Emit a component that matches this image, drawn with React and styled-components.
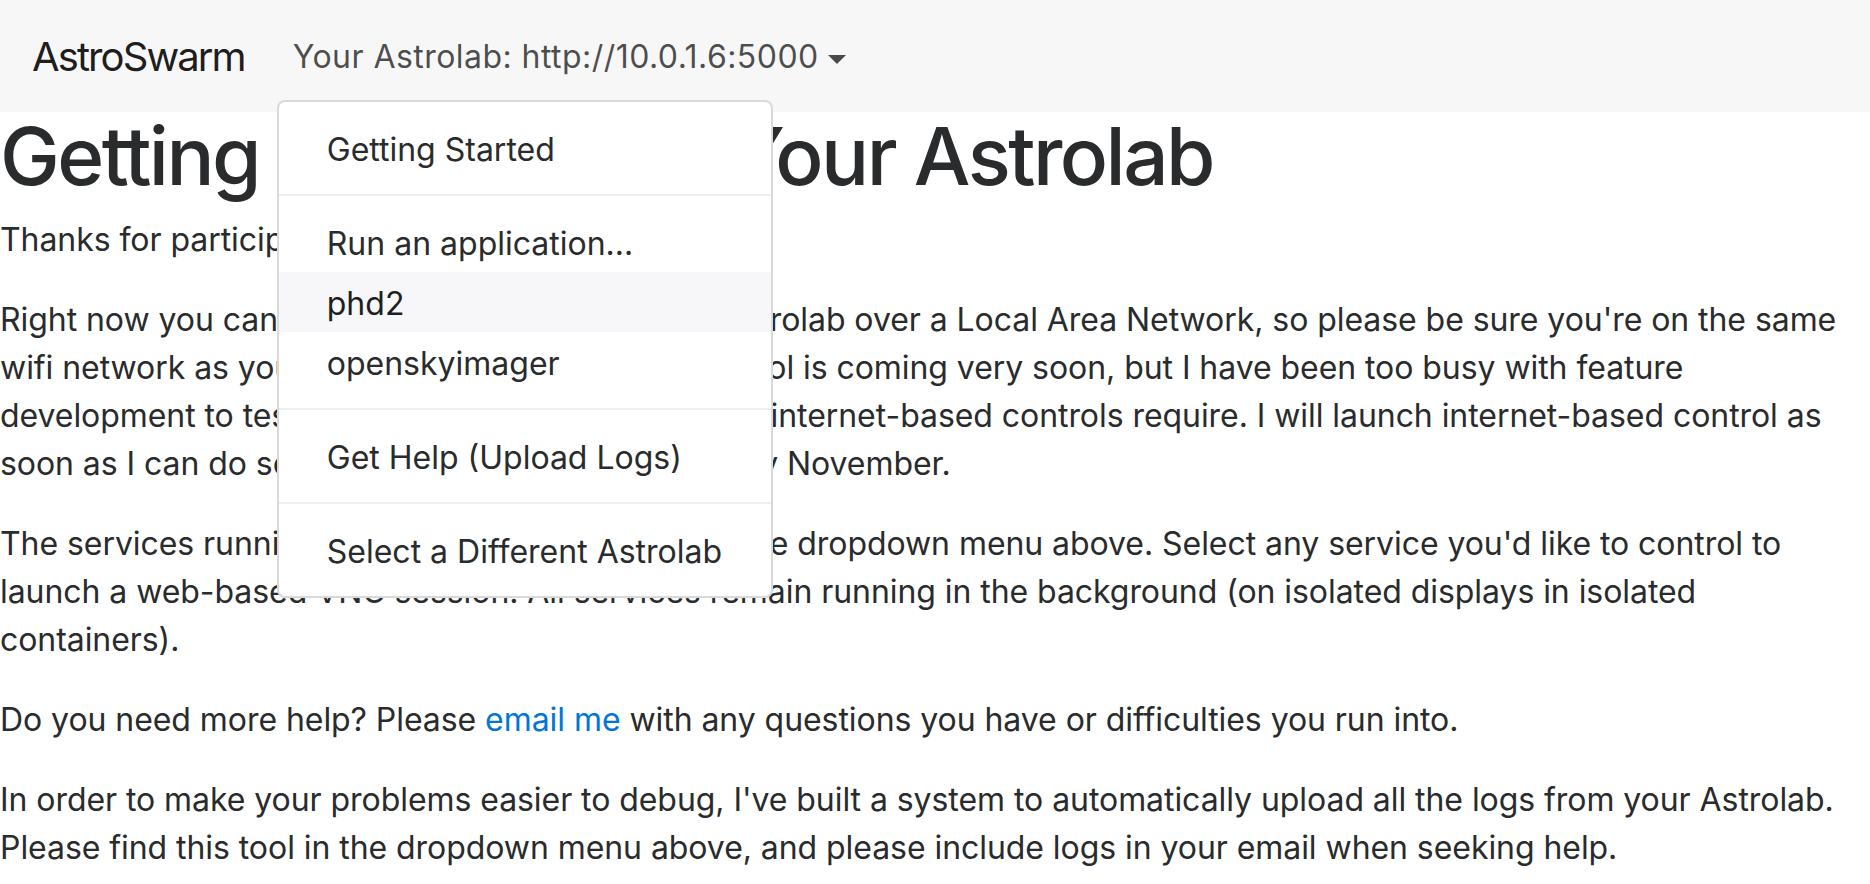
import React from "react";
import styled, { createGlobalStyle } from "styled-components";

const GlobalStyle = createGlobalStyle`
  *, *::before, *::after { box-sizing: border-box; }
  html, body { margin: 0; padding: 0; }
  body {
    font-family: Inter, "Noto Sans", "Liberation Sans", sans-serif;
    font-size: 32px;
    line-height: 1.5;
    color: #292b2c;
    background: #ffffff;
  }
`;

const Navbar = styled.nav`
  display: flex;
  align-items: center;
  padding: 16px 32px;
  background: #f7f7f7;
`;

const Brand = styled.a`
  display: inline-block;
  padding: 9px 0 7px;
  margin-right: 32px;
  font-size: 40px;
  line-height: 60px;
  letter-spacing: -1.9px;
  color: rgba(0, 0, 0, 0.9);
  text-decoration: none;
  white-space: nowrap;
`;

const NavList = styled.ul`
  display: flex;
  list-style: none;
  margin: 0;
  padding: 0;
`;

const NavItem = styled.li`
  position: relative;
`;

const NavLink = styled.a`
  display: block;
  padding: 17px 16px 15px;
  line-height: 48px;
  letter-spacing: 0.45px;
  color: rgba(0, 0, 0, 0.7);
  text-decoration: none;
  white-space: nowrap;

  &::after {
    content: "";
    display: inline-block;
    width: 0;
    height: 0;
    margin-left: 0.3em;
    vertical-align: middle;
    border-top: 0.3em solid;
    border-right: 0.3em solid transparent;
    border-left: 0.3em solid transparent;
  }
`;

const Menu = styled.div`
  position: absolute;
  top: 100%;
  left: 0;
  z-index: 1000;
  min-width: 496px;
  margin-top: 4px;
  padding: 16px 0;
  background: #ffffff;
  border: 2px solid rgba(0, 0, 0, 0.15);
  border-radius: 8px;
`;

const MenuItem = styled.a`
  display: block;
  padding: 8px 48px 4px;
  line-height: 48px;
  white-space: nowrap;
  color: ${(p) => (p.$hover ? "#1d1e1f" : "#292b2c")};
  background: ${(p) => (p.$hover ? "#f7f7f9" : "transparent")};
  text-decoration: none;
`;

const Divider = styled.div`
  height: 2px;
  margin: 16px 0;
  background: #eceeef;
`;

const Main = styled.main`
  display: block;
`;

const Heading = styled.h1`
  margin: 0 0 16px;
  font-size: 80px;
  font-weight: 500;
  line-height: 88px;
  letter-spacing: -2.55px;
  white-space: nowrap;
`;

const Para = styled.p`
  margin: 0 0 32px;
  letter-spacing: -0.06px;
`;

const Link = styled.a`
  color: #0275d8;
  text-decoration: none;
`;

export default function App() {
  return (
    <>
      <GlobalStyle />
      <Navbar>
        <Brand href="#">AstroSwarm</Brand>
        <NavList>
          <NavItem>
            <NavLink href="#">Your Astrolab: http://10.0.1.6:5000</NavLink>
            <Menu>
              <MenuItem href="#">Getting Started</MenuItem>
              <Divider />
              <MenuItem href="#">Run an application...</MenuItem>
              <MenuItem href="#" $hover>phd2</MenuItem>
              <MenuItem href="#">openskyimager</MenuItem>
              <Divider />
              <MenuItem href="#">Get Help (Upload Logs)</MenuItem>
              <Divider />
              <MenuItem href="#">Select a Different Astrolab</MenuItem>
            </Menu>
          </NavItem>
        </NavList>
      </Navbar>
      <Main>
        <Heading>Getting Started with Your Astrolab</Heading>
        <Para>Thanks for participating in the beta!</Para>
        <Para>
          Right now you can just access and control your Astrolab over a Local Area Network, so please be sure
          you're on the same wifi network as your Astrolab. Internet-based control is coming very soon, but I have
          been too busy with feature development to test the security and reliability that internet-based controls
          require. I will launch internet-based control as soon as I can do so safely, most likely some time by
          November.
        </Para>
        <Para>
          The services running on your device are listed in the dropdown menu above. Select any service you'd like
          to control to launch a web-based VNC session. All services remain running in the background (on isolated
          displays in isolated containers).
        </Para>
        <Para>
          Do you need more help? Please <Link href="#">email me</Link> with any questions you have or difficulties
          you run into.
        </Para>
        <Para>
          In order to make your problems easier to debug, I've built a system to automatically upload all the logs
          from your Astrolab. Please find this tool in the dropdown menu above, and please include logs in your
          email when seeking help.
        </Para>
      </Main>
    </>
  );
}
